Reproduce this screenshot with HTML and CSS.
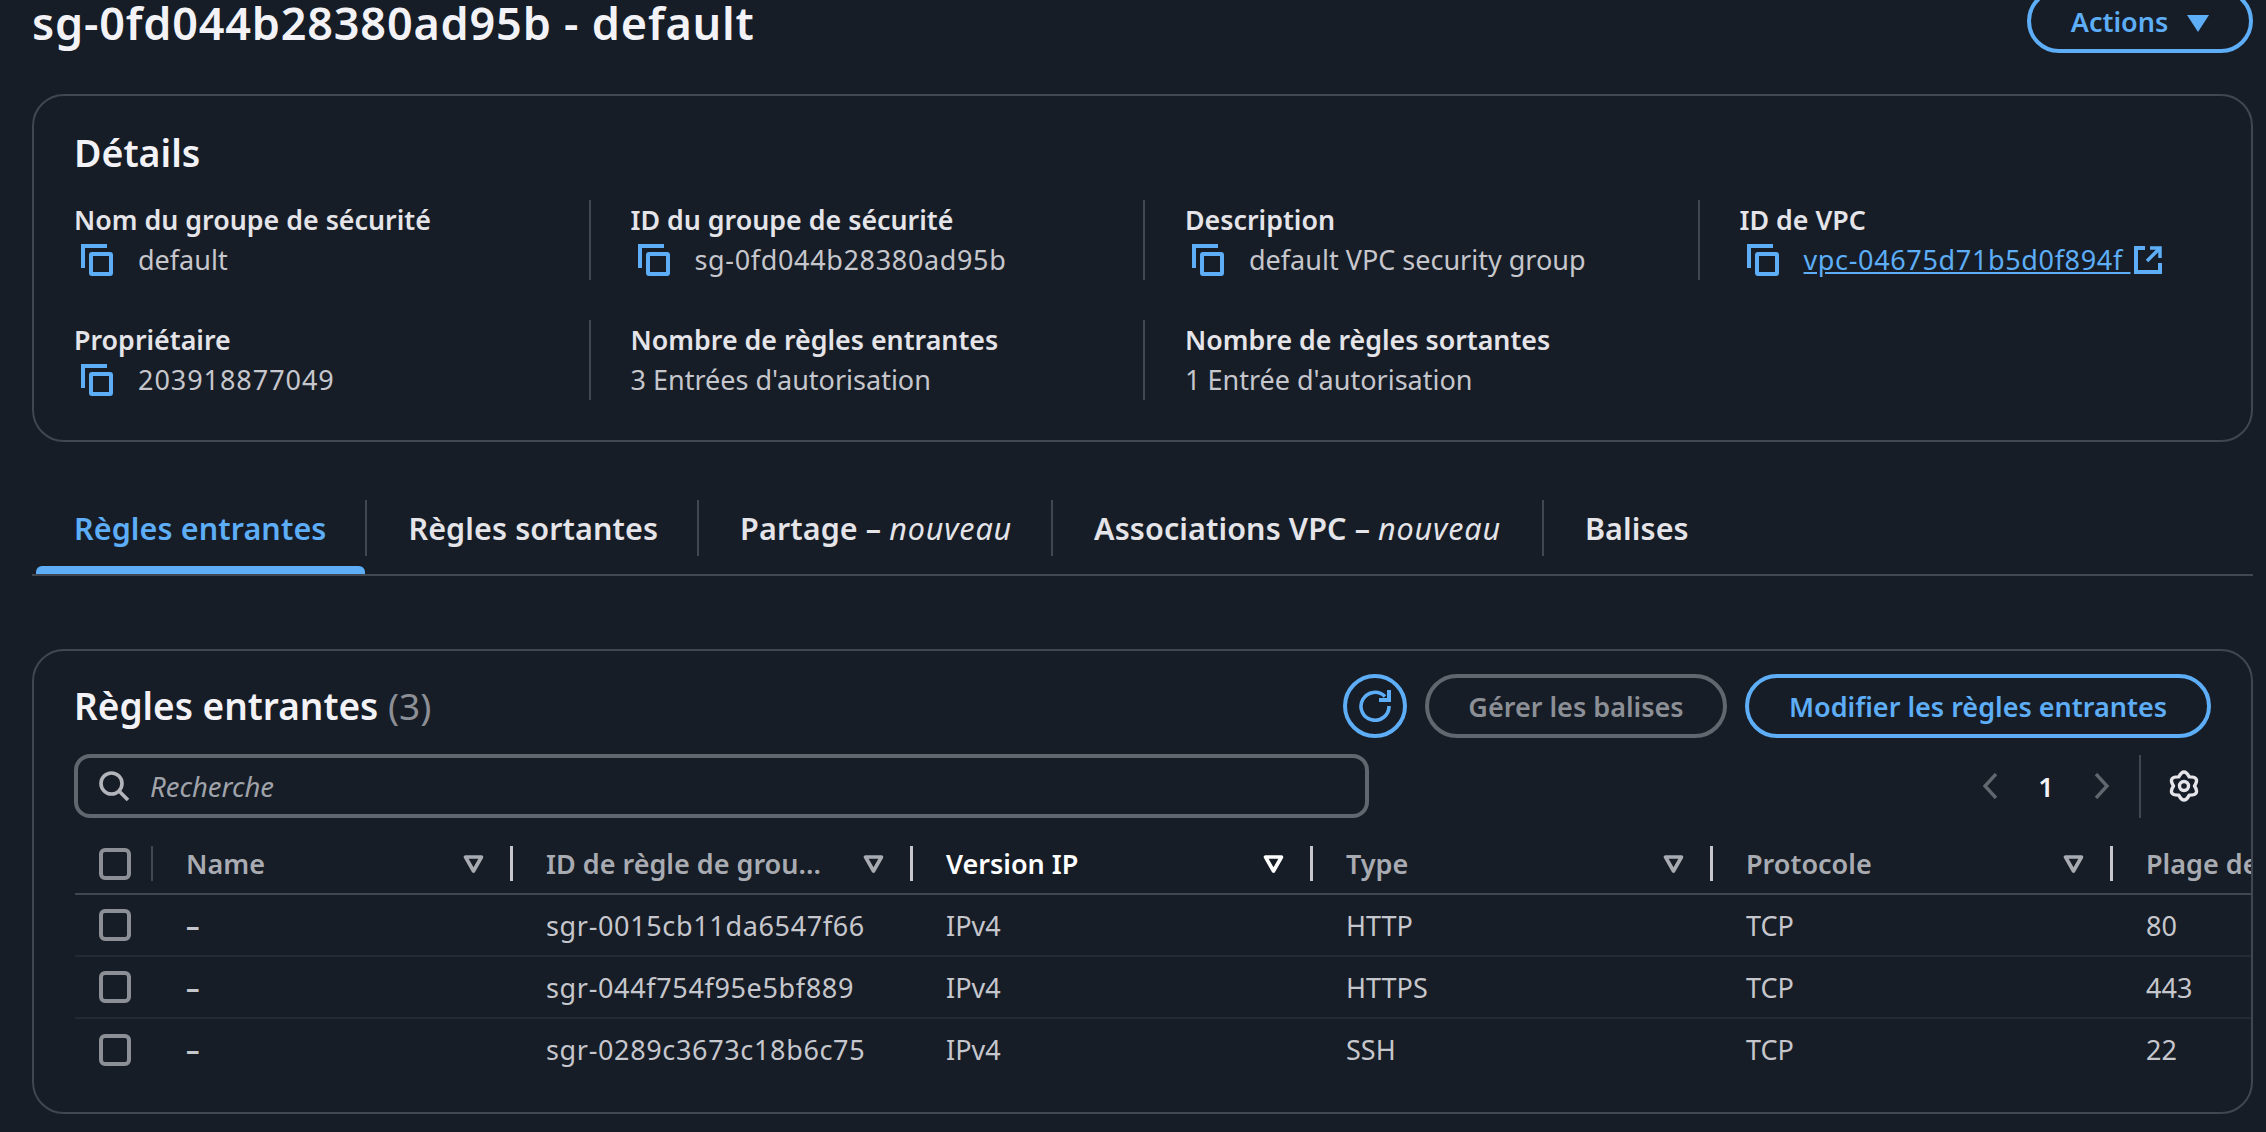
FILE: index.html
```html
<!DOCTYPE html>
<html lang="fr">
<head>
    <meta charset="UTF-8">
    <meta name="viewport" content="width=device-width, initial-scale=1.0">
    <title>sg-0fd044b28380ad95b - default</title>
    <link rel="stylesheet" href="styles.css">
</head>
<body>
    <svg class="defs" width="0" height="0">
        <symbol id="copy" viewBox="0 0 32 32">
            <path d="M2 24V2H26" fill="none" stroke="currentColor" stroke-width="4"/>
            <rect x="10" y="10" width="20" height="20" rx="1" fill="none" stroke="currentColor" stroke-width="4"/>
        </symbol>
        <symbol id="sort" viewBox="0 0 21 18">
            <path d="M2.5 2H18.5L10.5 16Z" fill="none" stroke="currentColor" stroke-width="3.6" stroke-linejoin="round"/>
        </symbol>
    </svg>

    <div class="page">
        <header class="page-head">
            <h1>sg-0fd044b28380ad95b - default</h1>
            <button class="btn btn-blue btn-actions">Actions <span class="caret"></span></button>
        </header>

        <section class="card details">
            <h2>Détails</h2>
            <div class="details-grid">
                <div class="field">
                    <div class="label">Nom du groupe de sécurité</div>
                    <div class="value"><svg class="copy"><use href="#copy"/></svg><span>default</span></div>
                </div>
                <div class="field">
                    <div class="label">ID du groupe de sécurité</div>
                    <div class="value"><svg class="copy"><use href="#copy"/></svg><span class="num">sg-0fd044b28380ad95b</span></div>
                </div>
                <div class="field">
                    <div class="label">Description</div>
                    <div class="value"><svg class="copy"><use href="#copy"/></svg><span>default VPC security group</span></div>
                </div>
                <div class="field">
                    <div class="label">ID de VPC</div>
                    <div class="value">
                        <svg class="copy"><use href="#copy"/></svg>
                        <a class="link num" href="#">vpc-04675d71b5d0f894f </a>
                        <svg class="ext" viewBox="0 0 28 28" width="28" height="28">
                            <path d="M11 2H2V26H26V17" fill="none" stroke="currentColor" stroke-width="4"/>
                            <path d="M16 2H26V12M26 2L13 15" fill="none" stroke="currentColor" stroke-width="3.5"/>
                        </svg>
                    </div>
                </div>
                <div class="field">
                    <div class="label">Propriétaire</div>
                    <div class="value"><svg class="copy"><use href="#copy"/></svg><span class="digits">203918877049</span></div>
                </div>
                <div class="field">
                    <div class="label">Nombre de règles entrantes</div>
                    <div class="value"><span>3 Entrées d'autorisation</span></div>
                </div>
                <div class="field">
                    <div class="label">Nombre de règles sortantes</div>
                    <div class="value"><span>1 Entrée d'autorisation</span></div>
                </div>
            </div>
        </section>

        <nav class="tabs">
            <div class="tab active"><span>Règles entrantes</span></div>
            <div class="tab"><span>Règles sortantes</span></div>
            <div class="tab"><span>Partage – <i>nouveau</i></span></div>
            <div class="tab"><span>Associations VPC – <i>nouveau</i></span></div>
            <div class="tab last"><span>Balises</span></div>
        </nav>

        <section class="card rules">
            <div class="rules-head">
                <h2>Règles entrantes <span class="count">(3)</span></h2>
                <div class="rules-actions">
                    <button class="btn-round">
                        <svg viewBox="0 0 32 32" width="32" height="32">
                            <path d="M26 6.5A14 14 0 1 0 30 16" fill="none" stroke="currentColor" stroke-width="3.6"/>
                            <path d="M20 10H30V0" fill="none" stroke="currentColor" stroke-width="4"/>
                        </svg>
                    </button>
                    <button class="btn btn-gray">Gérer les balises</button>
                    <button class="btn btn-blue btn-edit">Modifier les règles entrantes</button>
                </div>
            </div>

            <div class="toolbar">
                <div class="search">
                    <svg viewBox="0 0 31 30" width="31" height="30">
                        <circle cx="12.5" cy="12.5" r="10.5" fill="none" stroke="currentColor" stroke-width="3.6"/>
                        <path d="M20 20L29 29" fill="none" stroke="currentColor" stroke-width="3.6"/>
                    </svg>
                    <span>Recherche</span>
                </div>
                <div class="pager">
                    <svg class="chev" viewBox="0 0 16 26" width="16" height="26"><path d="M14 1L3 13L14 25" fill="none" stroke="currentColor" stroke-width="3.4"/></svg>
                    <span class="page-num">1</span>
                    <svg class="chev" viewBox="0 0 16 26" width="16" height="26"><path d="M2 1L13 13L2 25" fill="none" stroke="currentColor" stroke-width="3.4"/></svg>
                </div>
                <div class="settings">
                    <svg viewBox="0 0 32 32" width="32" height="32">
                        <path d="M10.75 6.91Q16 -3 21.25 6.91Q32.45 6.5 26.5 16Q32.45 25.5 21.25 25.09Q16 35 10.75 25.09Q-.45 25.5 5.5 16Q-.45 6.5 10.75 6.91Z" fill="none" stroke="currentColor" stroke-width="3.4" stroke-linejoin="round"/>
                        <circle cx="16" cy="16" r="4.5" fill="none" stroke="currentColor" stroke-width="3.4"/>
                    </svg>
                </div>
            </div>

            <table class="rules-table">
                <colgroup>
                    <col class="col-check">
                    <col class="col-name">
                    <col class="col-std">
                    <col class="col-std">
                    <col class="col-std">
                    <col class="col-std">
                    <col class="col-std">
                </colgroup>
                <thead>
                    <tr>
                        <th><div class="th th-check"><span class="box"></span></div></th>
                        <th><div class="th"><span>Name</span><svg class="sort"><use href="#sort"/></svg></div></th>
                        <th><div class="th"><span>ID de règle de grou...</span><svg class="sort"><use href="#sort"/></svg></div></th>
                        <th><div class="th sorted"><span>Version IP</span><svg class="sort"><use href="#sort"/></svg></div></th>
                        <th><div class="th"><span>Type</span><svg class="sort"><use href="#sort"/></svg></div></th>
                        <th><div class="th"><span>Protocole</span><svg class="sort"><use href="#sort"/></svg></div></th>
                        <th><div class="th"><span>Plage de ports</span><svg class="sort"><use href="#sort"/></svg></div></th>
                    </tr>
                </thead>
                <tbody>
                    <tr>
                        <td class="td-check"><span class="box"></span></td>
                        <td class="dash">–</td><td class="num">sgr-0015cb11da6547f66</td><td>IPv4</td><td>HTTP</td><td>TCP</td><td>80</td>
                    </tr>
                    <tr>
                        <td class="td-check"><span class="box"></span></td>
                        <td class="dash">–</td><td class="num">sgr-044f754f95e5bf889</td><td>IPv4</td><td>HTTPS</td><td>TCP</td><td>443</td>
                    </tr>
                    <tr>
                        <td class="td-check"><span class="box"></span></td>
                        <td class="dash">–</td><td class="num">sgr-0289c3673c18b6c75</td><td>IPv4</td><td>SSH</td><td>TCP</td><td>22</td>
                    </tr>
                </tbody>
            </table>
        </section>
    </div>
</body>
</html>
```

FILE: styles.css
```css
html, body {
    margin: 0;
    height: 100%;
    overflow: hidden;
    background-color: #161d26;
}
body {
    font-family: "Noto Sans", "Open Sans", sans-serif;
    font-size: 27px;
    color: #c6c6cd;
}
.defs {
    position: absolute;
}
.page {
    width: 2221px;
    margin-left: 32px;
}
.page-head {
    display: flex;
    justify-content: space-between;
    align-items: flex-end;
    height: 53px;
}
h1 {
    margin: 0 0 8px;
    align-self: center;
    font-size: 45px;
    line-height: 44px;
    font-weight: 600;
    letter-spacing: 0.8px;
    color: #f3f3f7;
}
h2 {
    margin: 0;
    font-size: 37.5px;
    line-height: 44px;
    font-weight: 600;
    color: #f3f3f7;
}
.rules-head h2 {
    font-size: 37px;
}
.btn {
    height: 64px;
    box-sizing: border-box;
    border-radius: 32px;
    border: 4px solid;
    background: none;
    font-family: inherit;
    font-size: 27px;
    font-weight: 600;
    padding: 0;
}
.btn-blue {
    color: #5dadf7;
    border-color: #5dadf7;
}
.btn-gray {
    width: 302px;
    color: #8c8f96;
    border-color: #62666e;
}
.btn-actions {
    width: 226px;
    flex: none;
}
.btn-edit {
    width: 466px;
}
.caret {
    display: inline-block;
    width: 0;
    height: 0;
    margin-left: 12px;
    border-left: 11px solid transparent;
    border-right: 11px solid transparent;
    border-top: 17px solid #5dadf7;
}
.card {
    border: 2px solid #414750;
    border-radius: 32px;
    overflow: hidden;
}
.details {
    margin-top: 41px;
    height: 348px;
    box-sizing: border-box;
    padding-top: 35px;
}
.details h2 {
    margin-left: 40px;
}
.details-grid {
    display: grid;
    grid-template-columns: repeat(4, 554.5px);
    grid-auto-rows: 80px;
    row-gap: 40px;
    margin: 25px 0 0;
}
.field {
    border-left: 2px solid #414750;
    padding-left: 40px;
}
.field:nth-child(4n+1) {
    border-left-color: transparent;
    padding-left: 38px;
}
.label {
    height: 40px;
    line-height: 40px;
    font-size: 26.8px;
    font-weight: 600;
    color: #e4e4e9;
}
.value {
    display: flex;
    align-items: center;
    height: 40px;
    white-space: pre;
}
.value span, .value .link {
    margin-top: -2px;
}
.num {
    letter-spacing: 0.65px;
}
.digits {
    letter-spacing: 0.95px;
}
.copy {
    width: 32px;
    height: 32px;
    margin: 0 25px 0 7px;
    color: #5dadf7;
}
.link {
    color: #5dadf7;
}
.ext {
    margin-left: 3px;
    color: #5dadf7;
}
.tabs {
    display: flex;
    margin-top: 58px;
    border-bottom: 2px solid #414750;
}
.tab {
    height: 74px;
    box-sizing: border-box;
    color: #e4e4e9;
    font-size: 30.5px;
    font-weight: 600;
}
.tab span {
    display: block;
    height: 56px;
    line-height: 56px;
    padding: 0 41px;
    border-right: 2px solid #414750;
    letter-spacing: 0.1px;
}
.tab.last span {
    border-right: none;
}
.tab i {
    font-weight: 400;
    letter-spacing: 0.85px;
}
.tab.active {
    color: #5dadf7;
}
.tab.active::after {
    content: "";
    display: block;
    height: 8px;
    margin: 10px 2px 0 4px;
    background-color: #5dadf7;
    border-radius: 6px 6px 0 0;
}
.tab:first-child span {
    padding: 0 39px 0 42px;
}
.tab:nth-child(2) span, .tab:nth-child(3) span {
    padding-right: 39px;
}
.rules {
    margin-top: 73px;
    height: 465px;
    box-sizing: border-box;
}
.rules-head {
    display: flex;
    justify-content: space-between;
    align-items: center;
    margin-top: 23px;
    padding: 0 40px 0 40px;
    height: 64px;
}
.count {
    font-weight: 400;
    color: #8c8f96;
}
.rules-actions {
    display: flex;
    gap: 18px;
}
.btn-round {
    display: flex;
    align-items: center;
    justify-content: center;
    width: 64px;
    height: 64px;
    box-sizing: border-box;
    border: 4px solid #5dadf7;
    border-radius: 50%;
    background: none;
    color: #5dadf7;
    padding: 0;
}
.toolbar {
    display: flex;
    align-items: center;
    height: 64px;
    margin-top: 16px;
    padding: 0 40px 0 40px;
}
.search {
    display: flex;
    align-items: center;
    width: 1295px;
    height: 64px;
    box-sizing: border-box;
    border: 4px solid #62666e;
    border-radius: 16px;
    padding-left: 21px;
    color: #b4b4bb;
    font-style: italic;
    font-size: 27.5px;
}
.search span {
    margin-left: 20px;
    color: #a0a3aa;
}
.pager {
    display: flex;
    align-items: center;
    margin-left: auto;
    color: #62666e;
}
.page-num {
    width: 20px;
    margin: 0 38px;
    text-align: center;
    color: #f3f3f7;
    font-weight: 600;
}
.settings {
    display: flex;
    align-items: center;
    height: 63px;
    margin: 0 11px 0 29px;
    padding-left: 27px;
    border-left: 2px solid #414750;
    color: #e4e4e9;
}
.rules-table {
    table-layout: fixed;
    width: 2438px;
    margin: 28px 0 0 41px;
    border-collapse: collapse;
}
.col-check {
    width: 78px;
}
.col-name {
    width: 360px;
}
.col-std {
    width: 400px;
}
th {
    padding: 0 0 12px;
    border-bottom: 2px solid #414750;
    text-align: left;
    font-weight: 600;
    color: #a9abb2;
}
.th {
    display: flex;
    align-items: center;
    justify-content: space-between;
    box-sizing: border-box;
    height: 35px;
    padding: 0 26px 0 33px;
    border-right: 3px solid #c6c6cd;
    white-space: nowrap;
}
.th.sorted {
    color: #fff;
}
.th-check {
    padding: 0 0 0 24px;
    border-right: 2px solid #414750;
}
.sort {
    width: 21px;
    height: 18px;
    flex: none;
}
.box {
    display: block;
    width: 32px;
    height: 32px;
    box-sizing: border-box;
    border: 4px solid #8c8f96;
    border-radius: 6px;
}
td {
    height: 62px;
    box-sizing: border-box;
    padding: 0 0 0 33px;
    border-bottom: 2px solid #232a34;
    white-space: nowrap;
}
tbody tr:last-child td {
    border-bottom: none;
}
.td-check {
    padding-left: 24px;
}
.dash {
    font-weight: 700;
}
```
